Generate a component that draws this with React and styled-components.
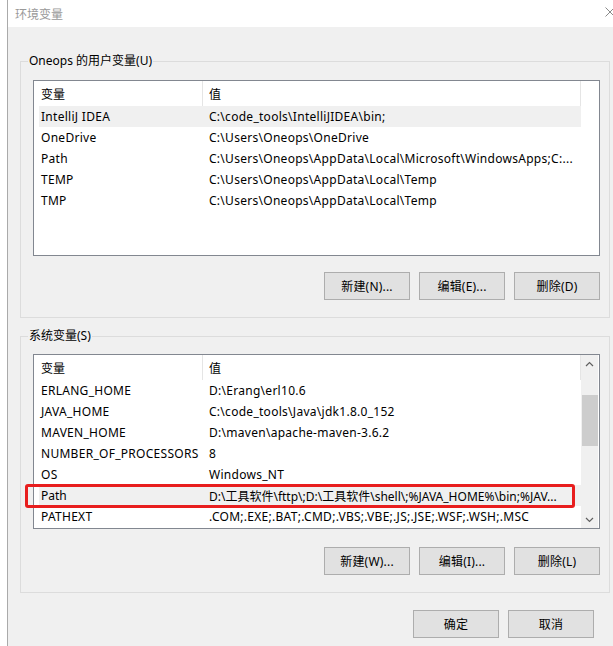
import styled, { createGlobalStyle } from "styled-components";

const GlobalStyle = createGlobalStyle`
  html, body {
    margin: 0;
    background: #fff;
  }
  body {
    font-family: "Noto Sans", "Noto Sans CJK SC", sans-serif;
    font-size: 12px;
    color: #000;
  }
`;

const Window = styled.div`
  margin-left: 7px;
  width: 605px;
  height: 646px;
  border-left: 1px solid #aaaaaa;
  display: flex;
  flex-direction: column;
  overflow: hidden;
`;

const TitleBar = styled.div`
  height: 27px;
  flex: none;
  background: #fff;
  display: flex;
  align-items: center;
  justify-content: space-between;
  padding-left: 7px;
  color: #999;
  font-family: "Noto Sans CJK SC", sans-serif;
`;

const CloseIcon = styled.svg`
  width: 10px;
  height: 10px;
  margin-right: -2px;
  margin-top: -4px;
`;

const Body = styled.div`
  flex: 1;
  background: #f0f0f0;
  padding: 26px 0 0 12px;
  display: flex;
  flex-direction: column;
`;

const Group = styled.fieldset`
  width: 590px;
  box-sizing: border-box;
  margin: ${(p) => p.$top}px 0 0 0;
  padding: 0;
  border: 1px solid #dcdcdc;
  min-width: 0;
`;

const Legend = styled.legend`
  margin-left: 7px;
  padding: 0 1px;
  line-height: 16px;
  font-size: 12px;
`;

const GroupInner = styled.div`
  padding: ${(p) => p.$pad}px 9px 17px 12px;
`;

const ListBox = styled.div`
  height: ${(p) => p.$height}px;
  box-sizing: border-box;
  border: 1px solid #828790;
  background: #fff;
  display: flex;
`;

const ListContent = styled.div`
  flex: 1;
  padding-left: 5px;
  display: flex;
  flex-direction: column;
`;

const SideColumn = styled.div`
  width: 18px;
  flex: none;
  display: flex;
  flex-direction: column;
`;

const HeaderRow = styled.div`
  display: grid;
  grid-template-columns: 164px 1fr;
  height: 25px;
  flex: none;
`;

const HeaderCell = styled.div`
  border-right: 1px solid #e5e5e5;
  padding-left: ${(p) => (p.$first ? 2 : 6)}px;
  display: flex;
  align-items: center;
  font-family: "Noto Sans CJK SC", sans-serif;
`;

const Row = styled.div`
  position: relative;
  display: grid;
  grid-template-columns: 164px 1fr;
  height: 21px;
  flex: none;
  letter-spacing: ${(p) => (p.$marked ? 0 : 0.28)}px;
  background: ${(p) => (p.$selected ? "#f0f0f0" : "transparent")};
`;

const Cell = styled.div`
  padding-left: ${(p) => (p.$first ? 2 : 6)}px;
  display: flex;
  align-items: center;
  white-space: nowrap;
  overflow: hidden;
`;

const Marker = styled.div`
  position: absolute;
  left: -14px;
  right: 6px;
  top: -1px;
  bottom: -2px;
  border: 3px solid #e81e1e;
  border-radius: 3px;
  pointer-events: none;
`;

const ScrollBar = styled.div`
  width: 17px;
  flex: 1;
  background: #f0f0f0;
  display: flex;
  flex-direction: column;
`;

const ScrollArrow = styled.div`
  height: 17px;
  flex: none;
  display: flex;
  align-items: center;
  justify-content: center;
`;

const ScrollTrack = styled.div`
  flex: 1;
  display: flex;
  flex-direction: column;
`;

const Thumb = styled.div`
  margin: ${(p) => p.$offset}px 0 0 1px;
  height: ${(p) => p.$size}px;
  background: #cdcdcd;
`;

const ButtonRow = styled.div`
  display: flex;
  justify-content: flex-end;
  gap: 9px;
  margin-top: ${(p) => p.$gap}px;
`;

const Button = styled.button`
  width: 86px;
  height: 28px;
  box-sizing: border-box;
  border: 1px solid #adadad;
  background: #e1e1e1;
  font-family: "Noto Sans", "Noto Sans CJK SC", sans-serif;
  font-size: 12px;
  letter-spacing: 0.2px;
  color: #000;
  padding: 0;
`;

const Footer = styled.div`
  display: flex;
  justify-content: flex-end;
  gap: 9px;
  margin-top: 17px;
  padding-right: 19px;
`;

const userVars = [
  ["IntelliJ IDEA", "C:\\code_tools\\IntelliJIDEA\\bin;", true],
  ["OneDrive", "C:\\Users\\Oneops\\OneDrive"],
  ["Path", "C:\\Users\\Oneops\\AppData\\Local\\Microsoft\\WindowsApps;C:..."],
  ["TEMP", "C:\\Users\\Oneops\\AppData\\Local\\Temp"],
  ["TMP", "C:\\Users\\Oneops\\AppData\\Local\\Temp"],
];

const systemVars = [
  ["ERLANG_HOME", "D:\\Erang\\erl10.6"],
  ["JAVA_HOME", "C:\\code_tools\\Java\\jdk1.8.0_152"],
  ["MAVEN_HOME", "D:\\maven\\apache-maven-3.6.2"],
  ["NUMBER_OF_PROCESSORS", "8"],
  ["OS", "Windows_NT"],
  ["Path", "D:\\工具软件\\fttp\\;D:\\工具软件\\shell\\;%JAVA_HOME%\\bin;%JAV...", true, true],
  ["PATHEXT", ".COM;.EXE;.BAT;.CMD;.VBS;.VBE;.JS;.JSE;.WSF;.WSH;.MSC"],
];

function Chevron({ up }) {
  return (
    <svg width="9" height="6" viewBox="0 0 9 6">
      <path
        d={up ? "M1 5 L4.5 1.5 L8 5" : "M1 1 L4.5 4.5 L8 1"}
        fill="none"
        stroke="#606060"
        strokeWidth="1.2"
      />
    </svg>
  );
}

function VarList({ rows, height, scroll }) {
  return (
    <ListBox $height={height}>
      <ListContent>
        <HeaderRow>
          <HeaderCell $first>变量</HeaderCell>
          <HeaderCell>值</HeaderCell>
        </HeaderRow>
        {rows.map(([name, value, selected, marked]) => (
          <Row key={name + value} $selected={selected} $marked={marked}>
            <Cell $first>{name}</Cell>
            <Cell>{value}</Cell>
            {marked && <Marker />}
          </Row>
        ))}
      </ListContent>
      <SideColumn>
        {scroll && (
          <ScrollBar>
            <ScrollArrow>
              <Chevron up />
            </ScrollArrow>
            <ScrollTrack>
              <Thumb $offset={23} $size={51} />
            </ScrollTrack>
            <ScrollArrow>
              <Chevron />
            </ScrollArrow>
          </ScrollBar>
        )}
      </SideColumn>
    </ListBox>
  );
}

export default function App() {
  return (
    <>
      <GlobalStyle />
      <Window>
        <TitleBar>
          <span>环境变量</span>
          <CloseIcon viewBox="0 0 10 10">
            <path d="M0.5 0.5 L9.5 9.5 M9.5 0.5 L0.5 9.5" stroke="#8a8a8a" strokeWidth="1" />
          </CloseIcon>
        </TitleBar>
        <Body>
          <Group $top={0}>
            <Legend>Oneops 的用户变量(U)</Legend>
            <GroupInner $pad={11}>
              <VarList rows={userVars} height={176} />
              <ButtonRow $gap={16}>
                <Button>新建(N)...</Button>
                <Button>编辑(E)...</Button>
                <Button>删除(D)</Button>
              </ButtonRow>
            </GroupInner>
          </Group>
          <Group $top={10}>
            <Legend>系统变量(S)</Legend>
            <GroupInner $pad={10}>
              <VarList rows={systemVars} height={175} scroll />
              <ButtonRow $gap={18}>
                <Button>新建(W)...</Button>
                <Button>编辑(I)...</Button>
                <Button>删除(L)</Button>
              </ButtonRow>
            </GroupInner>
          </Group>
          <Footer>
            <Button>确定</Button>
            <Button>取消</Button>
          </Footer>
        </Body>
      </Window>
    </>
  );
}
